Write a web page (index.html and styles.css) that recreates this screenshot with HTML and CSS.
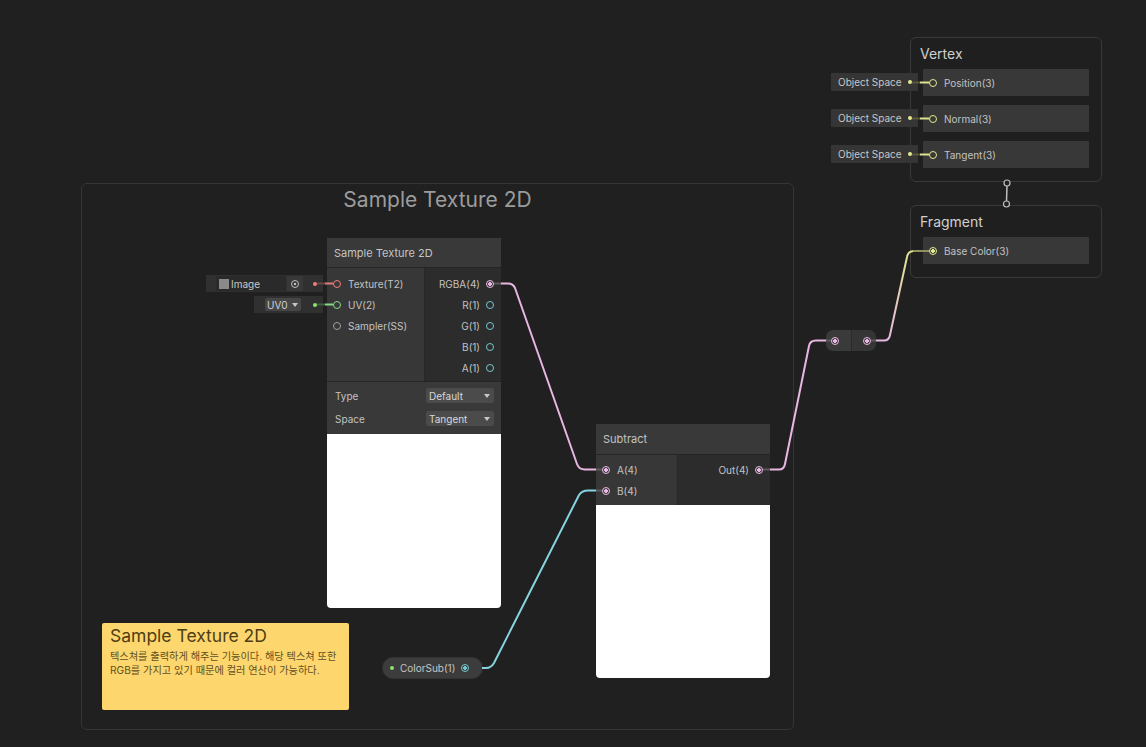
FILE: index.html
```html
<!DOCTYPE html>
<html lang="ko">
  <head>
    <meta charset="UTF-8" />
    <title>Shader Graph - Sample Texture 2D</title>
    <link rel="stylesheet" href="styles.css">
  </head>
  <body>
    <div class="graph">
      <div class="group">
        <div class="group-title">Sample Texture 2D</div>
      </div>

      <!-- master stack -->
      <div class="context context-vertex">
        <div class="context-title">Vertex</div>
        <div class="block"><span class="port port-vec3"></span>Position(3)</div>
        <div class="block"><span class="port port-vec3"></span>Normal(3)</div>
        <div class="block"><span class="port port-vec3"></span>Tangent(3)</div>
      </div>
      <div class="inline-stack">
        <div class="inline-input">Object Space<span class="dot dot-yellow"></span></div>
        <div class="inline-input">Object Space<span class="dot dot-yellow"></span></div>
        <div class="inline-input">Object Space<span class="dot dot-yellow"></span></div>
      </div>

      <div class="context context-fragment">
        <div class="context-title">Fragment</div>
        <div class="block"><span class="port port-vec3 linked"></span>Base Color(3)</div>
      </div>

      <!-- sample texture 2d -->
      <div class="tex-input">
        <div class="tex-field"><span class="swatch"></span>Image</div>
        <div class="tex-pick"><span class="pick-icon"></span></div>
        <span class="dot dot-red"></span>
      </div>
      <div class="uv-input">
        <div class="uv-drop">UV0 <span class="caret"></span></div>
        <span class="dot dot-green"></span>
      </div>

      <div class="node node-sample">
        <div class="node-title">Sample Texture 2D</div>
        <div class="node-ports">
          <div class="inputs">
            <div class="row"><span class="port port-tex"></span>Texture(T2)</div>
            <div class="row"><span class="port port-uv"></span>UV(2)</div>
            <div class="row"><span class="port port-ss"></span>Sampler(SS)</div>
          </div>
          <div class="outputs">
            <div class="row">RGBA(4)<span class="port port-vec4 linked"></span></div>
            <div class="row">R(1)<span class="port port-float"></span></div>
            <div class="row">G(1)<span class="port port-float"></span></div>
            <div class="row">B(1)<span class="port port-float"></span></div>
            <div class="row">A(1)<span class="port port-float"></span></div>
          </div>
        </div>
        <div class="node-props">
          <div class="prop"><span>Type</span><div class="select">Default<span class="caret"></span></div></div>
          <div class="prop"><span>Space</span><div class="select">Tangent<span class="caret"></span></div></div>
        </div>
        <div class="preview preview-sample"></div>
      </div>

      <!-- subtract -->
      <div class="node node-subtract">
        <div class="node-title">Subtract</div>
        <div class="node-ports">
          <div class="inputs inputs-sub">
            <div class="row"><span class="port port-vec4 linked"></span>A(4)</div>
            <div class="row"><span class="port port-vec4 linked"></span>B(4)</div>
          </div>
          <div class="outputs">
            <div class="row">Out(4)<span class="port port-vec4 linked"></span></div>
          </div>
        </div>
        <div class="preview preview-sub"></div>
      </div>

      <!-- redirect -->
      <div class="redirect">
        <div class="redirect-half"><span class="port port-vec4 linked"></span></div>
        <div class="redirect-half right"><span class="port port-vec4 linked"></span></div>
      </div>

      <!-- property -->
      <div class="property">
        <span class="dot dot-green"></span>
        <span class="property-name">ColorSub(1)</span>
        <span class="port port-float linked"></span>
      </div>

      <!-- sticky note -->
      <div class="sticky">
        <div class="sticky-title">Sample Texture 2D</div>
        <p>텍스쳐를 출력하게 해주는 기능이다. 해당 텍스쳐 또한 RGB를 가지고 있기 때문에 컬러 연산이 가능하다.</p>
      </div>

      <!-- edges drawn over the nodes -->
      <svg class="wires" width="1146" height="747" viewBox="0 0 1146 747">
        <defs>
          <linearGradient id="toBase" x1="0" y1="1" x2="0" y2="0">
            <stop offset="0" stop-color="#e9b6e2" />
            <stop offset="1" stop-color="#dfe38a" />
          </linearGradient>
        </defs>
        <!-- RGBA -> A -->
        <path class="wire wire-stub" d="M494 283.5 H501" />
        <path class="wire wire-pink" d="M501 283.5 H508 Q513 283.5 515 288 L577 464 Q579 469.5 585 469.5 H596" />
        <path class="wire wire-stub" d="M596 469.5 H602" />
        <!-- ColorSub -> B -->
        <path class="wire wire-cyan" d="M482 668 H486 Q491 668 494 663 L579 495 Q582 490.5 588 490.5 H596" />
        <path class="wire wire-stub" d="M596 490.5 H602" />
        <!-- Out -> redirect -->
        <path class="wire wire-stub" d="M763 469.5 H770" />
        <path class="wire wire-pink" d="M770 469.5 H779 Q784 469.5 785 464 L809 346 Q810 340.5 816 340.5 H826" />
        <path class="wire wire-stub" d="M826 340.5 H831" />
        <!-- redirect -> Base Color -->
        <path class="wire wire-stub" d="M871 340.5 H876" />
        <path class="wire" stroke="url(#toBase)" d="M876 340.5 H884 Q889 340.5 890 335 L907 257 Q908 251 914 251" />
        <path class="wire" stroke="#8f925e" d="M913 251 H929" />
        <!-- inline inputs -->
        <path class="wire" stroke="#6e4444" d="M317 283.5 H325" />
        <path class="wire" stroke="#e27a7a" d="M325 283.5 H333" />
        <path class="wire" stroke="#41603c" d="M317 304.5 H325" />
        <path class="wire" stroke="#86d886" d="M325 304.5 H333" />
        <path class="wire" stroke="#58583f" d="M912 82.5 H920" />
        <path class="wire" stroke="#dfe38a" d="M920 82.5 H929" />
        <path class="wire" stroke="#58583f" d="M912 118.5 H920" />
        <path class="wire" stroke="#dfe38a" d="M920 118.5 H929" />
        <path class="wire" stroke="#58583f" d="M912 154.5 H920" />
        <path class="wire" stroke="#dfe38a" d="M920 154.5 H929" />
        <!-- vertex -> fragment flow -->
        <line x1="1007" y1="186" x2="1006.5" y2="201" stroke="#bdbdbd" stroke-width="1.5" />
        <circle cx="1007" cy="183" r="3" fill="#1f1f1f" stroke="#bdbdbd" stroke-width="1.2" />
        <circle cx="1006.5" cy="204" r="3" fill="#1f1f1f" stroke="#bdbdbd" stroke-width="1.2" />
      </svg>
    </div>
  </body>
</html>
```

FILE: styles.css
```css
body {
  margin: 0;
  background-color: #202020;
  font-family: Inter, "Noto Sans", "Noto Sans CJK KR", sans-serif;
  color: #c4c4c4;
  overflow: hidden;
}

.graph {
  position: relative;
  width: 1146px;
  height: 747px;
  overflow: hidden;
}

.wires {
  position: absolute;
  top: 0;
  left: 0;
  pointer-events: none;
}

.wire {
  fill: none;
  stroke-width: 2;
}

.wire-pink {
  stroke: #e9b6e2;
}

.wire-cyan {
  stroke: #86d4df;
}

.wire-stub {
  stroke: #5b5b5b;
}

/* group */
.group {
  position: absolute;
  left: 81px;
  top: 183px;
  width: 711px;
  height: 545px;
  border: 1px solid #353535;
  border-radius: 6px;
}

.group-title {
  text-align: center;
  font-size: 21px;
  color: #9c9c9c;
  margin-top: 3px;
}

/* ports */
.port {
  display: inline-block;
  width: 8px;
  height: 8px;
  box-sizing: border-box;
  border-radius: 50%;
  border: 1.2px solid #999;
  flex-shrink: 0;
}

.port-tex { border-color: #f07f7f; }
.port-uv { border-color: #86dc86; }
.port-ss { border-color: #a0a0a0; }
.port-float { border-color: #73c8cf; }
.port-vec3 { border-color: #e4e98f; }
.port-vec4 { border-color: #eab8e4; }

.port.linked.port-vec4 {
  background: radial-gradient(circle, #eab8e4 0 1.6px, #3a3a3a 2px);
}

.port.linked.port-vec3 {
  background: radial-gradient(circle, #e4e98f 0 1.6px, #3a3a3a 2px);
}

.port.linked.port-float {
  background: radial-gradient(circle, #73c8cf 0 1.6px, #3a3a3a 2px);
}

.dot {
  display: inline-block;
  width: 4px;
  height: 4px;
  border-radius: 50%;
}

.dot-yellow { background: #e4e98f; }
.dot-red { background: #f07f7f; }
.dot-green { background: #8ee270; }

/* master stack contexts */
.context {
  position: absolute;
  left: 910px;
  width: 192px;
  border: 1px solid #393939;
  border-radius: 6px;
  background: #1f1f1f;
  padding: 0 12px 13px 12px;
  box-sizing: border-box;
  display: flex;
  flex-direction: column;
  gap: 9px;
}

.context-vertex {
  top: 37px;
  height: 145px;
}

.context-fragment {
  top: 205px;
  height: 73px;
}

.context-title {
  font-size: 14px;
  color: #cfcfcf;
  height: 18px;
  line-height: 18px;
  margin-top: 7px;
  margin-bottom: -3px;
  margin-left: -3px;
}

.block {
  height: 27px;
  flex-shrink: 0;
  background: #383838;
  display: flex;
  align-items: center;
  gap: 7px;
  padding-left: 6px;
  font-size: 10px;
  color: #c2c2c2;
}

.inline-stack {
  position: absolute;
  left: 831px;
  top: 73px;
  display: flex;
  flex-direction: column;
  gap: 18px;
}

.inline-input {
  width: 87px;
  height: 18px;
  box-sizing: border-box;
  background: #353535;
  font-size: 10px;
  color: #c6c6c6;
  display: flex;
  align-items: center;
  justify-content: space-between;
  padding: 0 6px 0 7px;
}

/* texture + uv inline inputs */
.tex-input {
  position: absolute;
  left: 206px;
  top: 275px;
  width: 117px;
  height: 17px;
  box-sizing: border-box;
  background: #303030;
  display: flex;
  align-items: center;
  padding: 0 6px 0 10px;
}

.tex-field {
  width: 67px;
  height: 15px;
  background: #2a2a2a;
  display: flex;
  align-items: center;
  font-size: 10px;
  color: #c8c8c8;
  gap: 2px;
  padding-left: 3px;
}

.swatch {
  width: 10px;
  height: 10px;
  background: #8a8a8a;
}

.tex-pick {
  width: 16px;
  height: 15px;
  background: #383838;
  display: flex;
  align-items: center;
  justify-content: center;
  margin-left: 1px;
}

.pick-icon {
  width: 8px;
  height: 8px;
  box-sizing: border-box;
  border-radius: 50%;
  border: 1px solid #bdbdbd;
  background: radial-gradient(circle, #bdbdbd 0 1.3px, transparent 1.6px);
}

.tex-input .dot {
  margin-left: auto;
}

.uv-input {
  position: absolute;
  left: 254px;
  top: 296px;
  width: 69px;
  height: 17px;
  box-sizing: border-box;
  background: #303030;
  display: flex;
  align-items: center;
  padding: 0 6px 0 11px;
}

.uv-drop {
  height: 13px;
  width: 36px;
  background: #464646;
  border-radius: 2px;
  font-size: 10px;
  color: #d0d0d0;
  display: flex;
  align-items: center;
  padding-left: 2px;
  gap: 4px;
  box-sizing: border-box;
}

.uv-input .dot {
  margin-left: auto;
}

.caret {
  width: 0;
  height: 0;
  border-left: 3.5px solid transparent;
  border-right: 3.5px solid transparent;
  border-top: 4px solid #c8c8c8;
}

/* nodes */
.node {
  position: absolute;
  width: 174px;
  display: flex;
  flex-direction: column;
  font-size: 10px;
  color: #c2c2c2;
}

.node-sample {
  left: 327px;
  top: 238px;
}

.node-subtract {
  left: 596px;
  top: 424px;
}

.node-title {
  height: 29px;
  background: #393939;
  display: flex;
  align-items: center;
  padding-left: 7px;
  font-size: 11px;
  color: #c4c4c4;
  border-bottom: 1px solid #252525;
}

.node-subtract .node-title {
  height: 30px;
}

.node-ports {
  display: flex;
}

.inputs {
  width: 98px;
  background: #373737;
  padding-top: 5px;
  box-sizing: border-box;
  border-right: 1px solid #282828;
}

.inputs-sub {
  width: 82px;
  padding-top: 4px;
  padding-bottom: 4px;
}

.outputs {
  flex: 1;
  background: #2c2c2c;
  padding-top: 5px;
  padding-bottom: 3px;
}

.node-subtract .outputs {
  padding-top: 4px;
}

.row {
  height: 21px;
  display: flex;
  align-items: center;
  gap: 7px;
}

.inputs .row {
  padding-left: 6px;
}

.outputs .row {
  justify-content: flex-end;
  padding-right: 7px;
  gap: 6px;
}

.node-props {
  background: #393939;
  border-top: 1px solid #252525;
  padding: 2px 8px 4px 8px;
}

.prop {
  height: 23px;
  display: flex;
  align-items: center;
  justify-content: space-between;
}

.select {
  width: 68px;
  height: 15px;
  box-sizing: border-box;
  background: #4b4b4b;
  border-radius: 2px;
  display: flex;
  align-items: center;
  justify-content: space-between;
  padding: 0 4px 0 3px;
  margin-right: -1px;
  color: #d8d8d8;
}

.preview {
  background: #ffffff;
  border-radius: 0 0 4px 4px;
}

.preview-sample {
  height: 174px;
}

.preview-sub {
  height: 173px;
}

/* redirect */
.redirect {
  position: absolute;
  left: 826px;
  top: 330px;
  width: 50px;
  height: 21px;
  border-radius: 7px;
  overflow: hidden;
  display: flex;
}

.redirect-half {
  flex: 1;
  background: #3a3a3a;
  display: flex;
  align-items: center;
  padding-left: 5px;
}

.redirect-half.right {
  background: #353535;
  border-left: 1px solid #2a2a2a;
  justify-content: flex-end;
  padding: 0 5px 0 0;
}

/* property */
.property {
  position: absolute;
  left: 382px;
  top: 657px;
  width: 101px;
  height: 22px;
  box-sizing: border-box;
  border-radius: 11px;
  background: #3c3c3c;
  border: 1px solid #333;
  display: flex;
  align-items: center;
  padding: 0 13px 0 7px;
  font-size: 10px;
  color: #c4c4c4;
}

.property-name {
  margin-left: 6px;
  flex: 1;
}

/* sticky note */
.sticky {
  position: absolute;
  left: 102px;
  top: 623px;
  width: 247px;
  height: 87px;
  box-sizing: border-box;
  background: #fdd66e;
  border-radius: 2px;
  padding: 2px 8px;
  color: #4d3d12;
}

.sticky-title {
  font-size: 17.5px;
  line-height: 22px;
}

.sticky p {
  margin: 2px 0 0 0;
  font-size: 10.2px;
  line-height: 14px;
  color: #62501f;
}
```
